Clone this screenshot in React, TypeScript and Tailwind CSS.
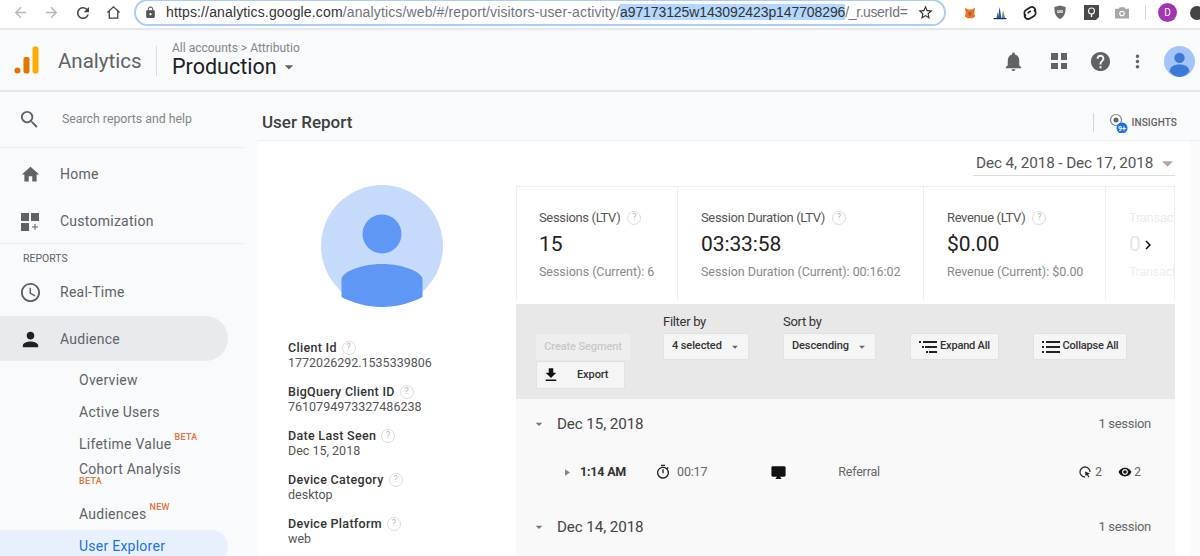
import {
  MdAccessTime,
  MdArrowBack,
  MdArrowDropDown,
  MdArrowForward,
  MdChevronRight,
  MdDesktopMac,
  MdFileDownload,
  MdHelp,
  MdHome,
  MdLock,
  MdMoreVert,
  MdNotifications,
  MdOutlineTimer,
  MdPerson,
  MdRefresh,
  MdRemoveRedEye,
  MdSearch,
  MdStarBorder,
} from 'react-icons/md';

const font = { fontFamily: 'Roboto, sans-serif' };

function Hint({ size = 'w-[14px] h-[14px] text-[9px]' }: { size?: string }) {
  return (
    <span className={`inline-flex items-center justify-center rounded-full border border-[#dcdcdc] text-[#b5b5b5] ${size}`}>?</span>
  );
}

function Avatar({ className }: { className: string }) {
  return (
    <svg viewBox="0 0 122 122" className={className}>
      <circle cx="61" cy="61" r="61" fill="#c6dafc" />
      <circle cx="61" cy="49" r="19.5" fill="#5e97f6" />
      <path d="M20.5 112 V94 C20.5 88 38 79 61 79 C84 79 101.5 88 101.5 94 V112 C90 118 76 122 61 122 C46 122 32 118 20.5 112 Z" fill="#5e97f6" />
    </svg>
  );
}

function BrowserBar() {
  return (
    <div className="h-[30px] pb-[3px] bg-white flex items-center relative overflow-hidden border-b-2 border-[#e6e7e9]">
      <MdArrowBack className="ml-[12px] shrink-0 text-[#b4b6b9] w-[17px] h-[17px]" />
      <MdArrowForward className="ml-[14px] shrink-0 text-[#b4b6b9] w-[17px] h-[17px]" />
      <MdRefresh className="ml-[14px] shrink-0 text-[#444] w-[18px] h-[18px]" />
      <svg viewBox="0 0 16 16" className="ml-[14px] shrink-0 w-[15px] h-[15px]" fill="none" stroke="#444" strokeWidth="1.4">
        <path d="M1.5 8 8 2l6.5 6M3.5 7v7h9V7" />
      </svg>
      <div className="ml-[13px] shrink-0 w-[812px] h-[27px] -mt-[1px] rounded-full border-2 border-[#a9cdf7] flex items-center pl-[8px] bg-white">
        <MdLock className="text-[#555] w-[13px] h-[13px]" />
        <div className="ml-[9px] text-[14px] tracking-[0.14px] whitespace-nowrap text-[#70757a]" style={{ fontFamily: 'Liberation Sans, sans-serif' }}>
          <span className="text-[#333]">https://analytics.google.com</span>
          /analytics/web/#/report/visitors-user-activity/
          <span className="bg-[#b3d7fe] text-[#333] tracking-[-0.1px]">a97173125w143092423p147708296</span>
          <span className="tracking-[-0.4px]">/_r.userId=</span>
        </div>
        <MdStarBorder className="ml-[10px] text-[#333] w-[17px] h-[17px]" />
      </div>
      {/* extension icons */}
      <div className="ml-[18px] shrink-0 flex items-center">
        <svg viewBox="0 0 14 14" className="w-[12px] h-[12px]">
          <path d="M1 1l4 2h4l4-2-1 6 1 4-3 2H4l-3-2 1-4z" fill="#e8762a" />
          <path d="M5 6h4l-1 4H6z" fill="#c0561d" />
        </svg>
        <svg viewBox="0 0 14 14" className="ml-[17px] w-[14px] h-[14px]">
          <path d="M1 12h2.500l1-6 1 6H1z" fill="#2e7d32" />
          <path d="M5 12l1.500-11L8.500 12z" fill="#3949ab" />
          <path d="M9 12l1-8 2 8z" fill="#43a047" />
          <rect x="0.500" y="12" width="13" height="1.200" fill="#1a237e" />
        </svg>
        <svg viewBox="0 0 16 16" className="ml-[15px] w-[16px] h-[16px]" fill="none" stroke="#222" strokeWidth="1.700">
          <path d="M4 11a3.500 3.500 0 0 1 0-6l4-2.500a3.500 3.500 0 0 1 5 4.500" />
          <path d="M12 5a3.500 3.500 0 0 1 0 6l-4 2.500a3.500 3.500 0 0 1-5-4.500" />
          <path d="M6 8.500a2.500 2.500 0 0 1 3-2" />
        </svg>
        <svg viewBox="0 0 14 16" className="ml-[15px] w-[14px] h-[15px]">
          <path d="M1 2l6-1.500L13 2c0 6-1 10.500-6 13C2 12.500 1 8 1 2z" fill="#6a6a6a" />
          <text x="7" y="9" fontSize="5.500" textAnchor="middle" fill="#fff" fontFamily="Roboto" fontWeight="700">uo</text>
        </svg>
        <svg viewBox="0 0 15 15" className="ml-[17px] w-[15px] h-[15px]">
          <path d="M0 0h15v12l-3 3H0z" fill="#4a4a4a" />
          <circle cx="7.500" cy="6" r="3" fill="none" stroke="#fff" strokeWidth="1.200" />
          <path d="M7.500 9v3" stroke="#fff" strokeWidth="1.400" />
        </svg>
        <svg viewBox="0 0 15 13" className="ml-[16px] w-[14px] h-[13px]">
          <path d="M0 2.500h4L5 1h5l1 1.500h4V13H0z" fill="#a7a7a7" />
          <circle cx="7.500" cy="7.500" r="3" fill="#fff" />
          <circle cx="7.500" cy="7.500" r="1.700" fill="#a7a7a7" />
        </svg>
        <div className="ml-[16px] w-px h-[15px] bg-[#d8d8d8]" />
        <div className="ml-[12px] w-[19px] h-[19px] rounded-full bg-[#a336b0] flex items-center justify-center text-white text-[10px]" style={font}>D</div>
        <div className="ml-[13px] w-[14px] h-[14px] rounded-full bg-[#444] shrink-0" />
      </div>
    </div>
  );
}

function TopHeader() {
  return (
    <div className="h-[62px] pt-[2px] bg-[#f9fafb] border-b-2 border-[#e6e7e9] flex items-center" style={font}>
      <svg viewBox="0 0 24 28" className="ml-[14px] -mt-[2px] w-[25px] h-[28px]">
        <circle cx="3" cy="24.500" r="3" fill="#e37400" />
        <rect x="9" y="11" width="6" height="16.500" rx="2" fill="#e37400" />
        <rect x="18" y="0.500" width="6" height="27" rx="2.500" fill="#f9ab00" />
      </svg>
      <span className="ml-[19px] text-[20.500px] text-[#5f6368] w-[83px]">Analytics</span>
      <div className="ml-[15px] w-px h-[30px] bg-[#dadce0]" />
      <div className="ml-[15px] -mt-[2px] flex flex-col">
        <span className="text-[12px] leading-[14px] text-[#80868b]">All accounts &gt; Attributio</span>
        <div className="flex items-center leading-[26px] -mt-[1px]">
          <span className="text-[21.500px] text-[#202124]">Production</span>
          <MdArrowDropDown className="text-[#5f6368] w-[20px] h-[20px] ml-[2px]" />
        </div>
      </div>
      <div className="ml-auto flex items-center">
        <MdNotifications className="text-[#5f6368] w-[23px] h-[23px]" />
        <div className="ml-[26px] grid grid-cols-2 gap-[3px]">
          <span className="w-[6.500px] h-[6.500px] bg-[#5f6368]" />
          <span className="w-[6.500px] h-[6.500px] bg-[#5f6368]" />
          <span className="w-[6.500px] h-[6.500px] bg-[#5f6368]" />
          <span className="w-[6.500px] h-[6.500px] bg-[#5f6368]" />
        </div>
        <MdHelp className="ml-[22px] text-[#5f6368] w-[23px] h-[23px]" />
        <MdMoreVert className="ml-[15px] text-[#5f6368] w-[21px] h-[21px]" />
        <svg viewBox="0 0 30 30" className="ml-[16px] mr-[5px] w-[31px] h-[31px]">
          <circle cx="15" cy="15" r="15" fill="#a3c4fb" />
          <circle cx="15" cy="11.500" r="5" fill="#3c78d8" />
          <path d="M5.500 25c0-5 4-7 9.500-7s9.500 2 9.500 7c-2.500 3-6 5-9.500 5s-7-2-9.500-5z" fill="#3c78d8" />
        </svg>
      </div>
    </div>
  );
}

function NavRow({ icon, label, className = '' }: { icon: React.ReactNode; label: string; className?: string }) {
  return (
    <div className={`flex items-center ${className}`}>
      <div className="w-[60px] pl-[21px] shrink-0 flex">{icon}</div>
      <span className="text-[14px] tracking-[0.25px] text-[#5f6368]">{label}</span>
    </div>
  );
}

function SubRow({ label, badge, className = 'h-[32px]' }: { label: string; badge?: string; className?: string }) {
  return (
    <div className={`pl-[79px] flex items-center ${className}`}>
      <span className="text-[14px] tracking-[0.25px] text-[#5f6368]">{label}</span>
      {badge && <span className="ml-[3px] -mt-[12px] text-[9px] font-medium tracking-[0.3px] text-[#e8703a]">{badge}</span>}
    </div>
  );
}

function Sidebar() {
  return (
    <div className="w-[258px] shrink-0 bg-[#f9fafb] overflow-hidden" style={font}>
      <div className="h-[56px] w-[243px] flex items-center border-b border-[#e8eaed]">
        <MdSearch className="ml-[18px] text-[#5f6368] w-[23px] h-[23px]" />
        <span className="ml-[21px] text-[12.300px] text-[#80868b]">Search reports and help</span>
      </div>
      <div className="w-[243px] border-b border-[#e8eaed] h-[96px] pt-[3px]">
        <NavRow className="h-[47px]" icon={<MdHome className="-ml-[1px] text-[#5f6368] w-[21px] h-[21px]" />} label="Home" />
        <NavRow
          className="h-[47px]"
          icon={
            <svg viewBox="0 0 18 18" className="w-[18px] h-[18px]" fill="#5f6368">
              <rect x="0" y="0" width="8" height="8" />
              <rect x="10" y="0" width="8" height="8" />
              <rect x="0" y="10" width="8" height="8" />
              <path d="M13.500 11h1v2.500H17v1h-2.500V17h-1v-2.500H11v-1h2.500z" />
            </svg>
          }
          label="Customization"
        />
      </div>
      <div className="pl-[23px] text-[10.500px] leading-[12px] mt-[9px] text-[#5f6368]">REPORTS</div>
      <NavRow
        className="h-[47px] mt-[4px]"
        icon={<MdAccessTime className="-ml-[2px] text-[#5f6368] w-[23px] h-[23px]" />}
        label="Real-Time"
      />
      <NavRow
        className="h-[45px] pt-[1px] w-[228px] bg-[#e8eaed] rounded-r-[23px]"
        icon={<MdPerson className="-ml-[2px] text-[#202124] w-[23px] h-[23px]" />}
        label="Audience"
      />
      <SubRow label="Overview" className="h-[37px] pt-[1px]" />
      <SubRow label="Active Users" className="h-[32px] -mt-[5px] translate-y-[3px]" />
      <SubRow label="Lifetime Value" badge="BETA" className="h-[32px] translate-y-[3px]" />
      <div className="pl-[79px] h-[24px] mt-[3px] flex flex-col">
        <span className="text-[14px] leading-[18px] tracking-[0.25px] text-[#5f6368]">Cohort Analysis</span>
        <span className="text-[9px] leading-[7px] font-medium tracking-[0.3px] text-[#e8703a]">BETA</span>
      </div>
      <SubRow label="Audiences" badge="NEW" className="h-[32px] mt-[14px]" />
      <div className="pl-[79px] h-[33px] w-[228px] bg-[#e8f0fe] rounded-r-[20px] flex items-center">
        <span className="text-[14px] tracking-[0.25px] text-[#1a73e8]">User Explorer</span>
      </div>
    </div>
  );
}

function Field({ label, value }: { label: string; value: string }) {
  return (
    <div className="h-[44px]">
      <div className="flex items-center gap-[5px] leading-[15px]">
        <span className="text-[12.500px] font-medium tracking-[0.3px] text-[#333]">{label}</span>
        <Hint />
      </div>
      <div className="text-[12.500px] leading-[15px] text-[#555]">{value}</div>
    </div>
  );
}

function Metric({ width, title, value, sub, pad = 'pl-[23px]' }: { width: string; title: string; value: string; sub: string; pad?: string }) {
  return (
    <div className={`h-full border-r border-[#eeeeee] pt-[21px] shrink-0 ${pad} ${width}`}>
      <div className="flex items-center gap-[7px] h-[19px]">
        <span className="text-[13px] tracking-[-0.35px] text-[#555]">{title}</span>
        <Hint />
      </div>
      <div className="text-[21px] leading-[28px] mt-[3px] tracking-[-0.1px] text-[#222]">{value}</div>
      <div className="text-[12.500px] tracking-[-0.05px] leading-[16px] mt-[6px] text-[#888]">{sub}</div>
    </div>
  );
}

function MetricsRow() {
  return (
    <div className="h-[114px] border border-[#eeeeee] border-b-0 flex relative overflow-hidden">
      <Metric width="w-[161px]" pad="pl-[22px]" title="Sessions (LTV)" value="15" sub="Sessions (Current): 6" />
      <Metric width="w-[246px]" title="Session Duration (LTV)" value="03:33:58" sub="Session Duration (Current): 00:16:02" />
      <Metric width="w-[182px]" title="Revenue (LTV)" value="$0.00" sub="Revenue (Current): $0.00" />
      <div className="pl-[23px] pt-[21px] shrink-0 w-[68px] overflow-hidden">
        <div className="h-[19px] text-[13px] tracking-[-0.3px] text-[#ececec]">Transactions</div>
        <div className="text-[21px] leading-[28px] mt-[3px] text-[#e6e6e6]">0</div>
        <div className="text-[12.500px] tracking-[-0.25px] leading-[16px] mt-[6px] text-[#ececec] whitespace-nowrap">Transactions</div>
      </div>
      <MdChevronRight className="absolute left-[622px] top-[49px] w-[18px] h-[18px] text-[#111]" />
    </div>
  );
}

function SelectBox({ label, value, width }: { label: string; value: string; width: string }) {
  return (
    <div className={`flex flex-col ${width}`}>
      <span className="text-[13px] tracking-[-0.3px] leading-[16px] mt-[1px] text-[#333]">{label}</span>
      <div className="mt-[3px] h-[27px] bg-[#f5f5f5] border border-[#e2e2e2] rounded-[2px] flex items-center pl-[8px] pr-[6px]">
        <span className="text-[11px] font-medium tracking-[-0.1px] text-[#333]">{value}</span>
        <MdArrowDropDown className="ml-auto w-[14px] h-[14px] text-[#666]" />
      </div>
    </div>
  );
}

function ListIcon({ short }: { short?: boolean }) {
  return (
    <svg viewBox="0 0 18 12" className="w-[18px] h-[12px]" fill="#222">
      <rect x="0" y="0" width="2" height="2" />
      <rect x="4" y="0" width="14" height="2" />
      <rect x={short ? 3 : 0} y="5" width="2" height="2" />
      <rect x={short ? 6 : 4} y="5" width={short ? 12 : 14} height="2" />
      <rect x={short ? 7 : 0} y="10" width="2" height="2" />
      <rect x={short ? 10 : 4} y="10" width={short ? 8 : 14} height="2" />
    </svg>
  );
}

function ActionButton({ width, short, label }: { width: string; short?: boolean; label: string }) {
  return (
    <div className={`mt-[20px] h-[27px] bg-[#f5f5f5] border border-[#e2e2e2] rounded-[2px] flex items-center justify-center gap-[3px] ${width}`}>
      <ListIcon short={short} />
      <span className="text-[11px] font-medium tracking-[-0.2px] text-[#333]">{label}</span>
    </div>
  );
}

function FilterBar() {
  return (
    <div className="h-[95px] mt-[4px] bg-[#e8e8e8] flex pl-[20px] pt-[9px]">
      <div className="w-[89px] pt-[21px] shrink-0 mr-[38px]">
        <div className="h-[26px] w-[94px] bg-[#eeeeee] flex items-center justify-center text-[11px] font-medium tracking-[-0.1px] text-[#c9c9c9]">Create Segment</div>
        <div className="mt-[1px] h-[28px] w-[89px] bg-[#f5f5f5] border border-[#e2e2e2] flex items-center rounded-[2px]">
          <MdFileDownload className="ml-[5px] w-[18px] h-[18px] text-[#111]" />
          <span className="ml-[17px] text-[11px] font-medium tracking-[-0.1px] text-[#333]">Export</span>
        </div>
      </div>
      <SelectBox label="Filter by" value="4 selected" width="w-[86px]" />
      <div className="w-[34px] shrink-0" />
      <SelectBox label="Sort by" value="Descending" width="w-[93px]" />
      <div className="w-[34px] shrink-0" />
      <ActionButton width="w-[89px]" short label="Expand All" />
      <div className="w-[34px] shrink-0" />
      <ActionButton width="w-[94px]" label="Collapse All" />
    </div>
  );
}

function DayHeader({ date }: { date: string }) {
  return (
    <div className="flex items-center h-[50px] pr-[24px]">
      <MdArrowDropDown className="ml-[15px] w-[16px] h-[16px] text-[#777]" />
      <span className="ml-[10px] text-[15.200px] tracking-[-0.1px] text-[#444]">{date}</span>
      <span className="ml-auto text-[13px] tracking-[-0.3px] text-[#666]">1 session</span>
    </div>
  );
}

function SessionList() {
  return (
    <div className="bg-[#f9f9f9] flex-1">
      <DayHeader date="Dec 15, 2018" />
      <div className="flex items-center h-[46px] pr-[34px]">
        <svg viewBox="0 0 6 8" className="ml-[49px] w-[5px] h-[7px]" fill="#888"><path d="M0 0l6 4-6 4z" /></svg>
        <span className="ml-[10px] text-[12.500px] font-bold tracking-[-0.2px] text-[#333]">1:14 AM</span>
        <MdOutlineTimer className="ml-[29px] w-[16px] h-[16px] text-[#222]" />
        <span className="ml-[6px] text-[12.500px] tracking-[-0.2px] text-[#666]">00:17</span>
        <MdDesktopMac className="ml-[63px] w-[17px] h-[17px] text-[#111]" />
        <span className="ml-[51px] text-[12.500px] tracking-[-0.2px] text-[#666]">Referral</span>
        <svg viewBox="0 0 12 12" className="ml-auto w-[12px] h-[12px]" fill="none" stroke="#333" strokeWidth="1.300">
          <path d="M6 11A5 5 0 1 1 11 6" />
          <path d="M6 5.500l5 2-2 1 1.500 2.500-1 .500-1.500-2.500-1.500 1z" fill="#222" stroke="none" />
        </svg>
        <span className="ml-[4px] text-[12.500px] text-[#666]">2</span>
        <MdRemoveRedEye className="ml-[16px] w-[14px] h-[14px] text-[#111]" />
        <span className="ml-[2px] text-[12.500px] text-[#666]">2</span>
      </div>
      <div className="mt-[7px]"><DayHeader date="Dec 14, 2018" /></div>
    </div>
  );
}

function MainPanel() {
  return (
    <div className="flex-1 min-w-0 flex flex-col" style={font}>
      <div className="h-[49px] pt-[13px] flex items-center bg-[#f9fafb] border-b border-[#eeeff1] pr-[23px]">
        <span className="ml-[4px] text-[17px] font-medium text-[#3c4043]">User Report</span>
        <div className="ml-auto w-px h-[19px] bg-[#d4d4d4]" />
        <svg viewBox="0 0 20 20" className="ml-[14px] w-[20px] h-[20px]" fill="none">
          <circle cx="8" cy="7" r="5.500" stroke="#80868b" strokeWidth="1.200" />
          <circle cx="8" cy="7" r="2.500" fill="#5f6368" />
          <circle cx="14" cy="15" r="5.500" fill="#1a73e8" />
          <text x="14" y="17.500" textAnchor="middle" fontSize="7" fontWeight="700" fill="#fff" fontFamily="Roboto">9+</text>
        </svg>
        <span className="ml-[4px] text-[10px] font-medium tracking-[0.1px] text-[#5f6368]">INSIGHTS</span>
      </div>
      <div className="flex-1 bg-white flex overflow-hidden w-[932px] relative">
        <div className="w-[258px] shrink-0 pl-[30px] pt-[44px]">
          <Avatar className="ml-[33px] w-[122px] h-[122px]" />
          <div className="mt-[33px]">
            <Field label="Client Id" value="1772026292.1535339806" />
            <Field label="BigQuery Client ID" value="7610794973327486238" />
            <Field label="Date Last Seen" value="Dec 15, 2018" />
            <Field label="Device Category" value="desktop" />
            <Field label="Device Platform" value="web" />
          </div>
        </div>
        <div className="flex-1 min-w-0 pr-[15px] flex flex-col">
          <div className="h-[45px] flex justify-end items-start pt-[11px]">
            <div className="w-[202px] h-[24px] border-b border-[#dddddd] flex items-center pl-[3px] pr-[2px]">
              <span className="text-[15.300px] tracking-[-0.1px] text-[#555]">Dec 4, 2018 - Dec 17, 2018</span>
              <svg viewBox="0 0 10 5" className="ml-auto w-[11px] h-[6px]" fill="#aaa"><path d="M0 0h10L5 5z" /></svg>
            </div>
          </div>
          <MetricsRow />
          <FilterBar />
          <SessionList />
        </div>
      </div>
    </div>
  );
}

export default function App() {
  return (
    <div className="w-[1200px] h-[556px] overflow-hidden flex flex-col bg-[#f9fafb]">
      <BrowserBar />
      <TopHeader />
      <div className="flex h-[464px]">
        <Sidebar />
        <MainPanel />
      </div>
    </div>
  );
}
